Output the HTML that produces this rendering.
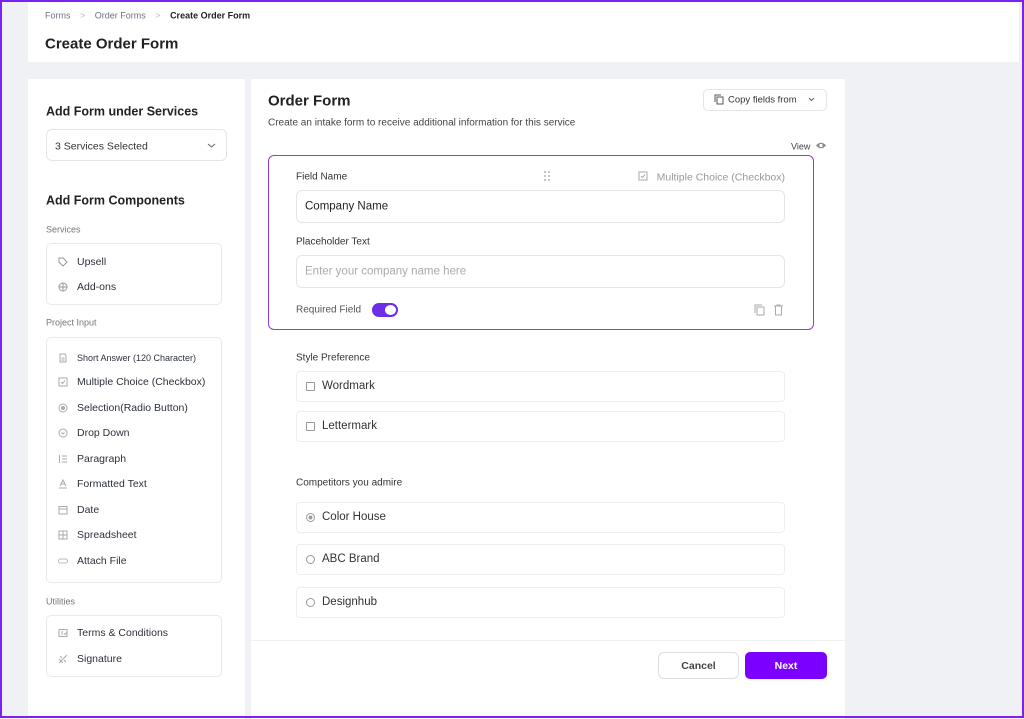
<!DOCTYPE html>
<html><head><meta charset="utf-8"><style>
*{box-sizing:border-box;margin:0;padding:0}
body{width:1024px;height:718px;overflow:hidden;background:#f0f1f5;font-family:"Liberation Sans",sans-serif;color:#1f2430;position:relative}
.a{position:absolute}
.frame{position:absolute;left:0;top:0;width:1024px;height:718px;border:2px solid #7a22f5;pointer-events:none;z-index:9}
.t{position:absolute;white-space:nowrap;line-height:1;transform:translateY(1.5px)}
.box{position:absolute;border:1px solid #e8e9ee;border-radius:5px;background:#fff}
.ic{position:absolute;width:10px;height:10px}
.it{position:absolute;left:77px;font-size:10.5px;color:#2c313b;white-space:nowrap;line-height:1;transform:translateY(1px)}
.in{position:absolute;left:296px;width:489px;border:1px solid #e3e5ea;border-radius:6px;background:#fff}
.opt{position:absolute;left:322px;font-size:11.5px;color:#333;line-height:1;transform:translateY(1px)}
</style></head><body>
<div class="frame"></div>
<div class="a" style="left:28px;top:0;width:991px;height:62px;background:#fff"></div>
<div class="t" style="left:45px;top:10px;font-size:9px;color:#6b7280">Forms <span style="color:#bbb;margin:0 7px">&gt;</span> Order Forms <span style="color:#bbb;margin:0 7px">&gt;</span> <b style="color:#222">Create Order Form</b></div>
<div class="t" style="left:45px;top:35px;font-size:15px;font-weight:600;color:#222">Create Order Form</div>

<div class="a" style="left:28px;top:79px;width:217px;height:640px;background:#fff"></div>
<div class="t" style="left:46px;top:104px;font-size:12.5px;font-weight:bold;color:#222">Add Form under Services</div>
<div class="box" style="left:46px;top:129px;width:181px;height:32px;border-radius:6px;border-color:#e3e5ea"></div>
<div class="t" style="left:55px;top:140px;font-size:10.5px;color:#333">3 Services Selected</div>
<svg class="a" style="left:207px;top:142px" width="9" height="7" viewBox="0 0 9 7"><path d="M1 2l3.5 3L8 2" fill="none" stroke="#666" stroke-width="1"/></svg>
<div class="t" style="left:46px;top:193px;font-size:12.5px;font-weight:bold;color:#222">Add Form Components</div>
<div class="t" style="left:46px;top:224px;font-size:9px;color:#777">Services</div>
<div class="box" style="left:46px;top:243px;width:176px;height:62px"></div>
<svg class="ic" style="left:58px;top:257px" viewBox="0 0 10 10"><path d="M1 1h4l4 4-4 4-4-4z" fill="none" stroke="#999"/></svg><div class="it" style="top:256px">Upsell</div>
<svg class="ic" style="left:58px;top:282px" viewBox="0 0 10 10"><circle cx="5" cy="5" r="4" fill="none" stroke="#999"/><path d="M1 5h8M5 1v8" stroke="#999"/></svg><div class="it" style="top:281px">Add-ons</div>
<div class="t" style="left:46px;top:317px;font-size:9px;color:#777">Project Input</div>
<div class="box" style="left:46px;top:337px;width:176px;height:246px"></div>
<svg class="ic" style="left:58px;top:353px" viewBox="0 0 10 10"><path d="M2 1h5l1 2v6H2z M3.5 5h3M3.5 7h3" fill="none" stroke="#aaa"/></svg><div class="it" style="top:353px;font-size:9px">Short Answer (120 Character)</div>
<svg class="ic" style="left:58px;top:377px" viewBox="0 0 10 10"><rect x="1" y="1" width="8" height="8" fill="none" stroke="#aaa"/><path d="M3 5l1.5 1.5L7 3.5" fill="none" stroke="#aaa"/></svg><div class="it" style="top:376px">Multiple Choice (Checkbox)</div>
<svg class="ic" style="left:58px;top:403px" viewBox="0 0 10 10"><circle cx="5" cy="5" r="4" fill="none" stroke="#aaa"/><circle cx="5" cy="5" r="2" fill="#aaa"/></svg><div class="it" style="top:402px">Selection(Radio Button)</div>
<svg class="ic" style="left:58px;top:428px" viewBox="0 0 10 10"><circle cx="5" cy="5" r="4" fill="none" stroke="#aaa"/><path d="M3.5 4.5L5 6l1.5-1.5" fill="none" stroke="#aaa"/></svg><div class="it" style="top:427px">Drop Down</div>
<svg class="ic" style="left:58px;top:454px" viewBox="0 0 10 10"><path d="M4 2h5M4 5h5M4 8h5M1.5 1v8" stroke="#aaa"/></svg><div class="it" style="top:453px">Paragraph</div>
<svg class="ic" style="left:58px;top:479px" viewBox="0 0 10 10"><path d="M2 7L5 1l3 6M3.5 5h3M1 9h8" fill="none" stroke="#aaa"/></svg><div class="it" style="top:478px">Formatted Text</div>
<svg class="ic" style="left:58px;top:505px" viewBox="0 0 10 10"><rect x="1" y="1.5" width="8" height="7.5" fill="none" stroke="#aaa"/><path d="M1 4h8" stroke="#aaa"/></svg><div class="it" style="top:504px">Date</div>
<svg class="ic" style="left:58px;top:530px" viewBox="0 0 10 10"><rect x="1" y="1" width="8" height="8" fill="none" stroke="#aaa"/><path d="M1 5h8M5 1v8" stroke="#aaa"/></svg><div class="it" style="top:529px">Spreadsheet</div>
<svg class="ic" style="left:58px;top:556px" viewBox="0 0 10 10"><rect x="0.5" y="3" width="9" height="4" rx="2" fill="none" stroke="#bbb"/></svg><div class="it" style="top:555px">Attach File</div>
<div class="t" style="left:46px;top:596px;font-size:9px;color:#777">Utilities</div>
<div class="box" style="left:46px;top:615px;width:176px;height:62px"></div>
<svg class="ic" style="left:58px;top:628px" viewBox="0 0 10 10"><rect x="1" y="1.5" width="8" height="7" fill="none" stroke="#aaa"/><path d="M3 4h2M3 6h2M6 5.5l1 1 1.5-2" fill="none" stroke="#aaa"/></svg><div class="it" style="top:627px">Terms &amp; Conditions</div>
<svg class="ic" style="left:58px;top:654px" viewBox="0 0 10 10"><path d="M1 9L9 1M2 2l2 2M6 6l2 2M1 5l4 4" stroke="#aaa"/></svg><div class="it" style="top:653px">Signature</div>

<div class="a" style="left:251px;top:79px;width:594px;height:640px;background:#fff"></div>
<div class="t" style="left:268px;top:92px;font-size:15px;font-weight:600;color:#222">Order Form</div>
<div class="box" style="left:703px;top:89px;width:124px;height:22px;border-color:#e3e5ea"></div>
<svg class="a" style="left:714px;top:94px" width="10" height="11" viewBox="0 0 10 11"><rect x="3" y="3" width="6" height="7" fill="none" stroke="#555"/><path d="M1 8V1h6" fill="none" stroke="#555"/></svg>
<div class="t" style="left:728px;top:94px;font-size:9.5px;color:#333">Copy fields from</div>
<svg class="a" style="left:808px;top:97px" width="7" height="5" viewBox="0 0 7 5"><path d="M1 1l2.5 2.5L6 1" fill="none" stroke="#666"/></svg>
<div class="t" style="left:268px;top:117px;font-size:10px;color:#444">Create an intake form to receive additional information for this service</div>
<div class="t" style="left:791px;top:141px;font-size:9px;color:#444">View</div>
<svg class="a" style="left:815px;top:141px" width="12" height="9" viewBox="0 0 12 9"><path d="M1 4.5Q6-1 11 4.5Q6 10 1 4.5z" fill="#888"/><circle cx="6" cy="4.5" r="1.6" fill="#fff"/></svg>

<div class="a" style="left:268px;top:155px;width:546px;height:175px;border:1.5px solid #8a3fd8;border-radius:6px"></div>
<div class="t" style="left:296px;top:171px;font-size:10px;color:#333">Field Name</div>
<svg class="a" style="left:544px;top:171px" width="6" height="10" viewBox="0 0 6 10"><g fill="#999"><circle cx="1" cy="1" r=".9"/><circle cx="5" cy="1" r=".9"/><circle cx="1" cy="5" r=".9"/><circle cx="5" cy="5" r=".9"/><circle cx="1" cy="9" r=".9"/><circle cx="5" cy="9" r=".9"/></g></svg>
<svg class="a" style="left:638px;top:171px" width="10" height="10" viewBox="0 0 10 10"><rect x="1" y="1" width="8" height="8" fill="none" stroke="#aaa"/><path d="M3 5l1.5 1.5L7 3.5" fill="none" stroke="#aaa"/></svg>
<div class="t" style="right:239px;top:171px;font-size:10.5px;color:#999">Multiple Choice (Checkbox)</div>
<div class="in" style="top:190px;height:33px"></div>
<div class="t" style="left:305px;top:200px;font-size:11.5px;color:#222">Company Name</div>
<div class="t" style="left:296px;top:236px;font-size:10px;color:#333">Placeholder Text</div>
<div class="in" style="top:255px;height:33px"></div>
<div class="t" style="left:305px;top:265px;font-size:11.5px;color:#aaa">Enter your company name here</div>
<div class="t" style="left:296px;top:304px;font-size:10px;color:#555">Required Field</div>
<div class="a" style="left:372px;top:303px;width:26px;height:14px;border-radius:7px;background:#6d2ee8"></div>
<div class="a" style="left:385px;top:305px;width:11px;height:10px;border-radius:50%;background:#fff"></div>
<svg class="a" style="left:754px;top:304px" width="11" height="12" viewBox="0 0 11 12"><rect x="3" y="3" width="7" height="8" fill="none" stroke="#aaa"/><path d="M1 9V1h7" fill="none" stroke="#aaa"/></svg>
<svg class="a" style="left:774px;top:304px" width="9" height="12" viewBox="0 0 9 12"><path d="M0 2h9M3 2V1h3v1M1.5 2v9h6V2" fill="none" stroke="#aaa"/></svg>

<div class="t" style="left:296px;top:352px;font-size:10px;color:#333">Style Preference</div>
<div class="in" style="top:371px;height:31px;border-color:#eceef2;border-radius:4px"></div>
<div class="a" style="left:306px;top:382px;width:9px;height:9px;border:1px solid #999;border-radius:1px"></div>
<div class="opt" style="top:380px">Wordmark</div>
<div class="in" style="top:411px;height:31px;border-color:#eceef2;border-radius:4px"></div>
<div class="a" style="left:306px;top:422px;width:9px;height:9px;border:1px solid #999;border-radius:1px"></div>
<div class="opt" style="top:420px">Lettermark</div>
<div class="t" style="left:296px;top:477px;font-size:10px;color:#333">Competitors you admire</div>
<div class="in" style="top:502px;height:31px;border-color:#eceef2;border-radius:4px"></div>
<div class="a" style="left:306px;top:513px;width:9px;height:9px;border:1px solid #999;border-radius:50%;background:radial-gradient(#999 35%,#fff 45%)"></div>
<div class="opt" style="top:511px">Color House</div>
<div class="in" style="top:544px;height:31px;border-color:#eceef2;border-radius:4px"></div>
<div class="a" style="left:306px;top:555px;width:9px;height:9px;border:1px solid #999;border-radius:50%"></div>
<div class="opt" style="top:553px">ABC Brand</div>
<div class="in" style="top:587px;height:31px;border-color:#eceef2;border-radius:4px"></div>
<div class="a" style="left:306px;top:598px;width:9px;height:9px;border:1px solid #999;border-radius:50%"></div>
<div class="opt" style="top:596px">Designhub</div>

<div class="a" style="left:251px;top:640px;width:594px;height:1px;background:#eef0f3"></div>
<div class="a" style="left:658px;top:652px;width:81px;height:27px;border:1px solid #dcdee3;border-radius:6px;text-align:center;line-height:27px;font-size:10.5px;font-weight:bold;color:#444">Cancel</div>
<div class="a" style="left:745px;top:652px;width:82px;height:27px;background:#7b00ff;border-radius:5px;text-align:center;line-height:28px;font-size:10.5px;font-weight:bold;color:#fff">Next</div>
</body></html>
